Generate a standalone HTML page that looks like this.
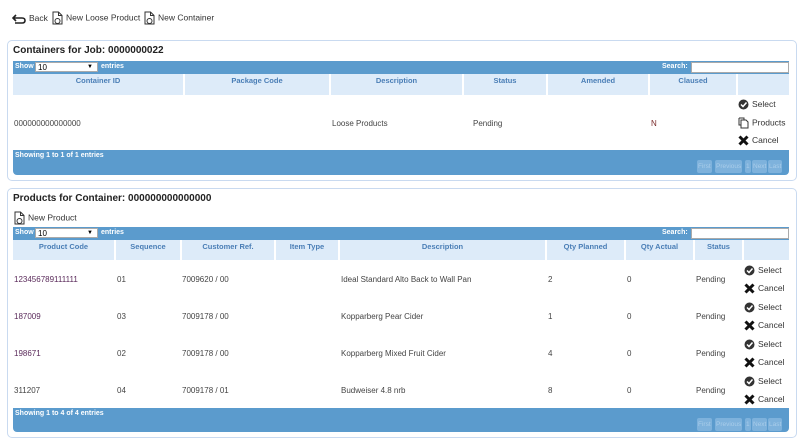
<!DOCTYPE html>
<html><head><meta charset="utf-8"><style>
*{margin:0;padding:0;box-sizing:border-box}
body{width:800px;height:441px;background:#fff;font-family:"Liberation Sans",sans-serif;font-size:8px;color:#444;position:relative;overflow:hidden}
.a{position:absolute;white-space:nowrap}
.panel{position:absolute;left:7px;width:790px;border:1px solid #c9daf0;border-radius:5px}
.title{font-size:10px;font-weight:bold;color:#222}
.bar{position:absolute;background:#5b9bcd;color:#fff;font-weight:bold;font-size:7px}
.sel{position:absolute;background:#fff;border:1px solid #aaa;height:10px;font-size:8px;color:#000;padding-left:2px}
.hd{position:absolute;background:#ddebf9;color:#4a7eb6;font-weight:bold;font-size:7.5px;text-align:center;padding-top:2px;border-right:2px solid #fff}
.pg{position:absolute;background:#7eb2dc;color:#a9cdea;font-size:6.5px;height:13px;line-height:13px;padding:0 1px;border-radius:2px}
.ic{display:inline-block;vertical-align:middle;margin-right:3px}
.tb{font-size:8.5px;color:#333}
</style></head><body>
<div class="a tb" style="left:12px;top:13px"><svg class="ic" width="14" height="10" viewBox="0 0 14 10"><path d="M4 1L1 4L4 7M1 4H10Q13 4 13 6.5Q13 9 10 9H3" fill="none" stroke="#222" stroke-width="1.6"/></svg>Back</div>
<div class="a tb" style="left:52px;top:11px"><svg class="ic" width="11" height="14" viewBox="0 0 11 14"><path d="M1 1H6.5L10 4.5V13H1Z" fill="#fff" stroke="#333"/><path d="M6.5 1V4.5H10" fill="none" stroke="#333"/><circle cx="5.5" cy="10" r="2.5" fill="#fff" stroke="#333"/></svg>New Loose Product</div>
<div class="a tb" style="left:144px;top:11px"><svg class="ic" width="11" height="14" viewBox="0 0 11 14"><path d="M1 1H6.5L10 4.5V13H1Z" fill="#fff" stroke="#333"/><path d="M6.5 1V4.5H10" fill="none" stroke="#333"/><circle cx="5.5" cy="10" r="2.5" fill="#fff" stroke="#333"/></svg>New Container</div>

<div class="panel" style="top:40px;height:141px"></div>
<div class="a title" style="left:13px;top:45px">Containers for Job: 0000000022</div>
<div class="bar" style="left:13px;top:61px;width:776px;height:13px"></div>
<div class="a" style="left:15px;top:63px;color:#fff;font-weight:bold;font-size:7px">Show</div>
<div class="sel" style="left:35px;top:62px;width:63px">10<span style="position:absolute;right:4px;font-size:6px;top:1px">▼</span></div>
<div class="a" style="left:101px;top:63px;color:#fff;font-weight:bold;font-size:7px">entries</div>
<div class="a" style="left:662px;top:63px;color:#fff;font-weight:bold;font-size:7px">Search:</div>
<div class="sel" style="left:691px;top:62px;width:98px;height:11px"></div>
<div class="hd" style="left:13px;top:74px;width:172px;height:21px">Container ID</div>
<div class="hd" style="left:185px;top:74px;width:146px;height:21px">Package Code</div>
<div class="hd" style="left:331px;top:74px;width:133px;height:21px">Description</div>
<div class="hd" style="left:464px;top:74px;width:84px;height:21px">Status</div>
<div class="hd" style="left:548px;top:74px;width:102px;height:21px">Amended</div>
<div class="hd" style="left:650px;top:74px;width:88px;height:21px">Claused</div>
<div class="hd" style="left:738px;top:74px;width:51px;height:21px;border:none"></div>
<div class="a" style="left:14px;top:119px">000000000000000</div>
<div class="a" style="left:332px;top:119px">Loose Products</div>
<div class="a" style="left:473px;top:119px">Pending</div>
<div class="a" style="left:651px;top:119px;color:#7a2a2a">N</div>
<div class="a" style="left:738px;top:99px;font-size:8.5px;color:#333"><svg class="ic" width="11" height="11" viewBox="0 0 11 11"><circle cx="5.5" cy="5.5" r="5" fill="#333"/><path d="M3 5.5L5 7.5L8.5 3.5" fill="none" stroke="#fff" stroke-width="1.5"/></svg>Select</div>
<div class="a" style="left:738px;top:117px;font-size:8.5px;color:#333"><svg class="ic" width="11" height="12" viewBox="0 0 11 12"><path d="M3 3H8L10 5V11H3Z" fill="#fff" stroke="#333"/><path d="M1 1H6V3M1 1V8H3" fill="none" stroke="#333"/></svg>Products</div>
<div class="a" style="left:738px;top:135px;font-size:8.5px;color:#333"><svg class="ic" width="11" height="11" viewBox="0 0 11 11"><path d="M1.5 1.5L9.5 9.5M9.5 1.5L1.5 9.5" stroke="#111" stroke-width="3"/></svg>Cancel</div>
<div class="bar" style="left:13px;top:150px;width:776px;height:25px;border-radius:0 0 4px 4px;padding:2px 2px">Showing 1 to 1 of 1 entries</div>
<div class="pg" style="left:697px;top:160px">First</div><div class="pg" style="left:715px;top:160px">Previous</div><div class="pg" style="left:745px;top:160px">1</div><div class="pg" style="left:752px;top:160px">Next</div><div class="pg" style="left:768px;top:160px">Last</div>

<div class="panel" style="top:188px;height:250px"></div>
<div class="a title" style="left:13px;top:193px">Products for Container: 000000000000000</div>
<div class="a tb" style="left:14px;top:211px"><svg class="ic" width="11" height="14" viewBox="0 0 11 14"><path d="M1 1H6.5L10 4.5V13H1Z" fill="#fff" stroke="#333"/><path d="M6.5 1V4.5H10" fill="none" stroke="#333"/><circle cx="5.5" cy="10" r="2.5" fill="#fff" stroke="#333"/></svg>New Product</div>
<div class="bar" style="left:13px;top:227px;width:776px;height:13px"></div>
<div class="a" style="left:15px;top:229px;color:#fff;font-weight:bold;font-size:7px">Show</div>
<div class="sel" style="left:35px;top:228px;width:63px">10<span style="position:absolute;right:4px;font-size:6px;top:1px">▼</span></div>
<div class="a" style="left:101px;top:229px;color:#fff;font-weight:bold;font-size:7px">entries</div>
<div class="a" style="left:662px;top:229px;color:#fff;font-weight:bold;font-size:7px">Search:</div>
<div class="sel" style="left:691px;top:228px;width:98px;height:11px"></div>
<div class="hd" style="left:13px;top:240px;width:103px;height:20px">Product Code</div>
<div class="hd" style="left:116px;top:240px;width:66px;height:20px">Sequence</div>
<div class="hd" style="left:182px;top:240px;width:94px;height:20px">Customer Ref.</div>
<div class="hd" style="left:276px;top:240px;width:64px;height:20px">Item Type</div>
<div class="hd" style="left:340px;top:240px;width:207px;height:20px">Description</div>
<div class="hd" style="left:547px;top:240px;width:79px;height:20px">Qty Planned</div>
<div class="hd" style="left:626px;top:240px;width:69px;height:20px">Qty Actual</div>
<div class="hd" style="left:695px;top:240px;width:49px;height:20px">Status</div>
<div class="hd" style="left:744px;top:240px;width:45px;height:20px;border:none"></div>

<div class="a" style="left:14px;top:275px;color:#5a2a5a">123456789111111</div><div class="a" style="left:117px;top:275px">01</div><div class="a" style="left:182px;top:275px">7009620 / 00</div><div class="a" style="left:341px;top:275px">Ideal Standard Alto Back to Wall Pan</div><div class="a" style="left:548px;top:275px">2</div><div class="a" style="left:627px;top:275px">0</div><div class="a" style="left:696px;top:275px">Pending</div>
<div class="a" style="left:14px;top:312px;color:#5a2a5a">187009</div><div class="a" style="left:117px;top:312px">03</div><div class="a" style="left:182px;top:312px">7009178 / 00</div><div class="a" style="left:341px;top:312px">Kopparberg Pear Cider</div><div class="a" style="left:548px;top:312px">1</div><div class="a" style="left:627px;top:312px">0</div><div class="a" style="left:696px;top:312px">Pending</div>
<div class="a" style="left:14px;top:349px;color:#5a2a5a">198671</div><div class="a" style="left:117px;top:349px">02</div><div class="a" style="left:182px;top:349px">7009178 / 00</div><div class="a" style="left:341px;top:349px">Kopparberg Mixed Fruit Cider</div><div class="a" style="left:548px;top:349px">4</div><div class="a" style="left:627px;top:349px">0</div><div class="a" style="left:696px;top:349px">Pending</div>
<div class="a" style="left:14px;top:386px">311207</div><div class="a" style="left:117px;top:386px">04</div><div class="a" style="left:182px;top:386px">7009178 / 01</div><div class="a" style="left:341px;top:386px">Budweiser 4.8 nrb</div><div class="a" style="left:548px;top:386px">8</div><div class="a" style="left:627px;top:386px">0</div><div class="a" style="left:696px;top:386px">Pending</div>

<div class="a" style="left:744px;top:265px;font-size:8.5px;color:#333"><svg class="ic" width="11" height="11" viewBox="0 0 11 11"><circle cx="5.5" cy="5.5" r="5" fill="#333"/><path d="M3 5.5L5 7.5L8.5 3.5" fill="none" stroke="#fff" stroke-width="1.5"/></svg>Select</div>
<div class="a" style="left:744px;top:283px;font-size:8.5px;color:#333"><svg class="ic" width="11" height="11" viewBox="0 0 11 11"><path d="M1.5 1.5L9.5 9.5M9.5 1.5L1.5 9.5" stroke="#111" stroke-width="3"/></svg>Cancel</div>
<div class="a" style="left:744px;top:302px;font-size:8.5px;color:#333"><svg class="ic" width="11" height="11" viewBox="0 0 11 11"><circle cx="5.5" cy="5.5" r="5" fill="#333"/><path d="M3 5.5L5 7.5L8.5 3.5" fill="none" stroke="#fff" stroke-width="1.5"/></svg>Select</div>
<div class="a" style="left:744px;top:320px;font-size:8.5px;color:#333"><svg class="ic" width="11" height="11" viewBox="0 0 11 11"><path d="M1.5 1.5L9.5 9.5M9.5 1.5L1.5 9.5" stroke="#111" stroke-width="3"/></svg>Cancel</div>
<div class="a" style="left:744px;top:339px;font-size:8.5px;color:#333"><svg class="ic" width="11" height="11" viewBox="0 0 11 11"><circle cx="5.5" cy="5.5" r="5" fill="#333"/><path d="M3 5.5L5 7.5L8.5 3.5" fill="none" stroke="#fff" stroke-width="1.5"/></svg>Select</div>
<div class="a" style="left:744px;top:357px;font-size:8.5px;color:#333"><svg class="ic" width="11" height="11" viewBox="0 0 11 11"><path d="M1.5 1.5L9.5 9.5M9.5 1.5L1.5 9.5" stroke="#111" stroke-width="3"/></svg>Cancel</div>
<div class="a" style="left:744px;top:376px;font-size:8.5px;color:#333"><svg class="ic" width="11" height="11" viewBox="0 0 11 11"><circle cx="5.5" cy="5.5" r="5" fill="#333"/><path d="M3 5.5L5 7.5L8.5 3.5" fill="none" stroke="#fff" stroke-width="1.5"/></svg>Select</div>
<div class="bar" style="left:13px;top:408px;width:776px;height:24px;border-radius:0 0 4px 4px;padding:2px 2px">Showing 1 to 4 of 4 entries</div>
<div class="a" style="left:744px;top:394px;font-size:8.5px;color:#333"><svg class="ic" width="11" height="11" viewBox="0 0 11 11"><path d="M1.5 1.5L9.5 9.5M9.5 1.5L1.5 9.5" stroke="#111" stroke-width="3"/></svg>Cancel</div>
<div class="pg" style="left:697px;top:418px">First</div><div class="pg" style="left:715px;top:418px">Previous</div><div class="pg" style="left:745px;top:418px">1</div><div class="pg" style="left:752px;top:418px">Next</div><div class="pg" style="left:768px;top:418px">Last</div>
</body></html>
